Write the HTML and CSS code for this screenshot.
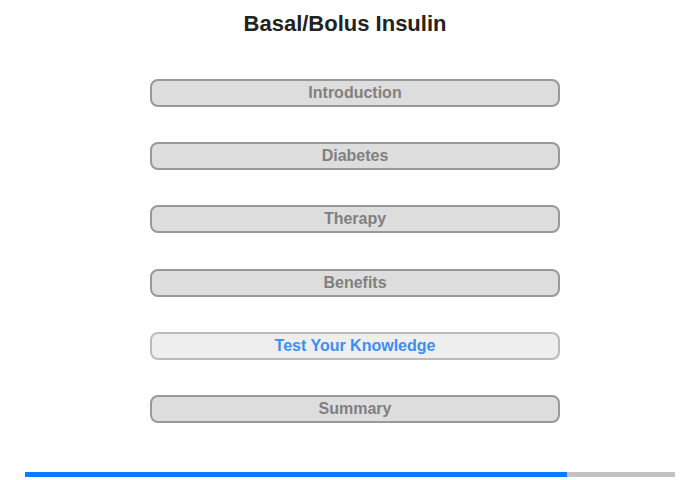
FILE: index.html
```html
<!DOCTYPE html>
<html lang="en">
<head>
    <meta charset="UTF-8">
    <meta name="viewport" content="width=device-width, initial-scale=1.0">
    <title>Basal/Bolus Insulin</title>
    <link rel="stylesheet" href="styles.css">
</head>
<body>
    <h1 class="title">Basal/Bolus Insulin</h1>
    <div class="menu">
        <div class="item">Introduction</div>
        <div class="item">Diabetes</div>
        <div class="item">Therapy</div>
        <div class="item">Benefits</div>
        <div class="item current">Test Your Knowledge</div>
        <div class="item">Summary</div>
    </div>
    <div class="progress">
        <div class="progress-fill" style="width: 83.4%"></div>
    </div>
</body>
</html>
```

FILE: styles.css
```css
body {
    margin: 0;
    font-family: "Liberation Sans", Arial, sans-serif;
    background-color: #fff;
}
.title {
    margin: 12px 0 0;
    padding-right: 10px;
    text-align: center;
    font-size: 22px;
    line-height: 23px;
    color: #222;
}
.menu {
    display: flex;
    flex-direction: column;
    gap: 35.2px;
    width: 410px;
    margin: 44px 0 0 150px;
}
.item {
    box-sizing: border-box;
    height: 28px;
    border: 2px solid #999;
    border-radius: 8px;
    background: #ddd;
    color: #808080;
    font-size: 16px;
    font-weight: bold;
    line-height: 24px;
    text-align: center;
}
.item.current {
    border-color: #bbb;
    background: #eee;
    color: #3d8ef2;
}
.progress {
    width: 650px;
    height: 5px;
    margin: 49px 0 0 25px;
    background: #c2c2c2;
}
.progress-fill {
    height: 100%;
    background: #0a7cff;
}
```
